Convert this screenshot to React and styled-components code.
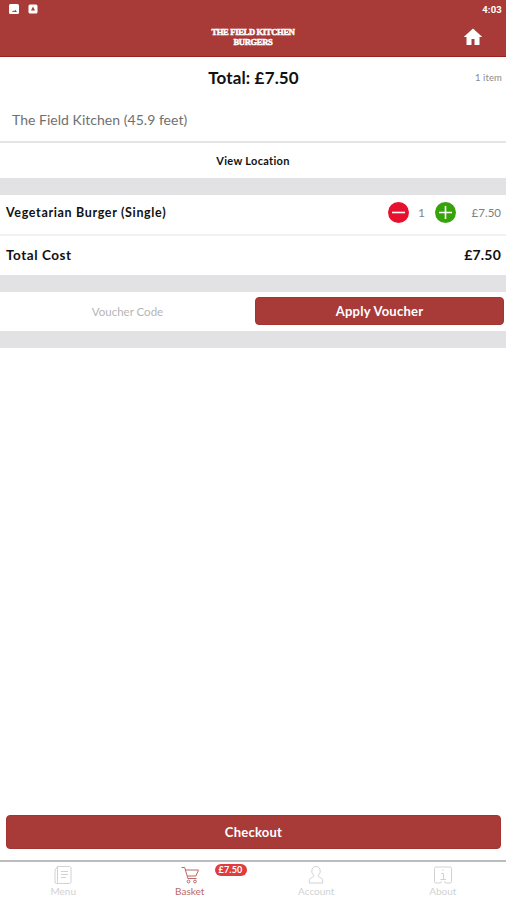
import React from 'react';
import styled, { createGlobalStyle } from 'styled-components';

const GlobalStyle = createGlobalStyle`
  * {
    box-sizing: border-box;
  }
  body {
    margin: 0;
    background-color: #fff;
    font-family: Lato, 'Open Sans', sans-serif;
    font-variant-ligatures: none;
    color: #111;
  }
`;

const Screen = styled.div`
  display: flex;
  flex-direction: column;
  width: 100%;
  height: 100vh;
  overflow: hidden;
`;

const Header = styled.header`
  height: 57px;
  flex: none;
  background-color: #a83b38;
  border-bottom: 1px solid #97201f;
  color: #fff;
`;

const StatusBar = styled.div`
  display: flex;
  align-items: center;
  height: 18px;
  padding: 0 4px 0 9px;
`;

const StatusIcon = styled.svg`
  width: 10px;
  height: 10px;
  margin-right: 9px;
`;

const Clock = styled.span`
  margin-left: auto;
  font-family: Roboto, sans-serif;
  font-size: 9.5px;
  font-weight: 700;
  letter-spacing: 0.2px;
`;

const TitleBar = styled.div`
  display: grid;
  grid-template-columns: 1fr auto 1fr;
  align-items: center;
  height: 38px;
  padding: 0 23px;
`;

const Brand = styled.div`
  grid-column: 2;
  font-family: 'Liberation Serif', serif;
  font-size: 8.5px;
  font-weight: 700;
  line-height: 10px;
  text-align: center;
  -webkit-text-stroke: 0.5px #fff;
  letter-spacing: -0.3px;
`;

const HomeIcon = styled.svg`
  justify-self: end;
  width: 20px;
  height: 18px;
  fill: #fff;
`;

const Text = styled.span`
  font-size: ${p => p.size || 13}px;
  font-weight: ${p => (p.$bold ? 700 : 400)};
  color: ${p => p.$color || '#111'};
  letter-spacing: ${p => p.$spacing || 0}px;
  line-height: 20px;
  white-space: nowrap;
`;

const Summary = styled.div`
  display: grid;
  grid-template-columns: 1fr auto 1fr;
  align-items: center;
  height: 42px;
  padding: 0 4px 0 5px;
  ${Text}:first-child {
    grid-column: 2;
  }
  ${Text}:last-child {
    justify-self: end;
  }
`;

const Venue = styled.div`
  display: flex;
  align-items: center;
  height: 44px;
  padding-left: 12px;
  border-bottom: 2px solid #e4e4e5;
`;

const LocationLink = styled.a`
  display: flex;
  align-items: center;
  justify-content: center;
  height: 35px;
`;

const Band = styled.div`
  height: 17px;
  flex: none;
  background-color: #e2e2e4;
`;

const Row = styled.div`
  display: flex;
  align-items: center;
  height: ${p => p.height}px;
  padding: 0 5px ${p => (p.$line ? 4 : 2)}px 6px;
  border-bottom: ${p => (p.$line ? '2px solid #f1f1f1' : 'none')};
`;

const Stepper = styled.div`
  display: flex;
  align-items: center;
  justify-content: space-between;
  width: 68px;
  margin-left: auto;
  margin-right: 16px;
`;

const StepIcon = styled.svg`
  width: 21px;
  height: 21px;
  stroke: #fff;
  stroke-width: 1.6;
`;

const Push = styled(Text)`
  margin-left: auto;
`;

const Voucher = styled.div`
  display: grid;
  grid-template-columns: 1fr 249px;
  align-items: center;
  height: 39px;
  padding: 0 2px 1px 0;
`;

const CodeInput = styled.input`
  width: 100%;
  border: 0;
  outline: 0;
  background: none;
  font-family: inherit;
  font-size: 11.5px;
  text-align: center;
  &::placeholder {
    color: #b5b5b5;
    opacity: 1;
  }
`;

const Button = styled.button`
  height: ${p => p.height}px;
  padding: 0;
  border: 1px solid #a23432;
  border-radius: 4px;
  background-color: #a83b38;
  color: #fff;
  font-family: inherit;
  font-size: 13px;
  font-weight: 700;
  letter-spacing: 0.25px;
`;

const Footer = styled.div`
  display: flex;
  flex-direction: column;
  margin-top: auto;
  padding: 0 5px 11px 6px;
`;

const TabBar = styled.nav`
  display: grid;
  grid-template-columns: repeat(4, 1fr);
  flex: none;
  height: 40px;
  border-top: 2px solid #bcbcbf;
`;

const Tab = styled.a`
  position: relative;
  display: flex;
  flex-direction: column;
  align-items: center;
  padding-top: 3px;
  color: ${p => (p.$active ? '#bb6967' : '#d2d2d2')};
  font-size: 10px;
  line-height: 12px;
`;

const TabIcon = styled.svg`
  width: 20px;
  height: 20px;
  fill: none;
  stroke: currentColor;
  stroke-width: 1;
`;

const Badge = styled.span`
  position: absolute;
  top: 2px;
  left: 88px;
  width: 32px;
  height: 12px;
  border-radius: 6px;
  background-color: #e13c3d;
  color: #fff;
  font-size: 9px;
  font-weight: 700;
  line-height: 12px;
  letter-spacing: 0.2px;
  text-align: center;
`;

const App = () => (
  <Screen>
    <GlobalStyle />
    <Header>
      <StatusBar>
        <StatusIcon viewBox="0 0 10 10">
          <rect width="10" height="10" rx="1.5" fill="#fff" />
          <path d="M3 8l1.2-1.4L5 7.4 6.3 5.8 8 8z" fill="#a83b38" />
        </StatusIcon>
        <StatusIcon viewBox="0 0 10 10">
          <rect x="0.5" y="0.5" width="9" height="9" rx="1.5" fill="#fff" />
          <path d="M5 2.600L7 6.500H3z" fill="#a83b38" />
        </StatusIcon>
        <Clock>4:03</Clock>
      </StatusBar>
      <TitleBar>
        <Brand>
          THE FIELD KITCHEN
          <br />
          BURGERS
        </Brand>
        <HomeIcon viewBox="0 0 20 18">
          <path d="M10 0.5L0.7 9H3.5v8h5v-6h3v6h5V9h2.8z" />
        </HomeIcon>
      </TitleBar>
    </Header>

    <Summary>
      <Text size={17} $bold $spacing={0.15}>Total: £7.50</Text>
      <Text size={9.5} $color="#8b8b8b" $spacing={0.1}>1 item</Text>
    </Summary>
    <Venue>
      <Text size={14} $color="#707070" $spacing={0.03}>The Field Kitchen (45.9 feet)</Text>
    </Venue>
    <LocationLink>
      <Text size={11} $bold $spacing={0.3}>View Location</Text>
    </LocationLink>
    <Band />
    <Row height={41} $line>
      <Text size={12.5} $bold $spacing={0.66}>Vegetarian Burger (Single)</Text>
      <Stepper>
        <StepIcon viewBox="0 0 21 21">
          <circle cx="10.5" cy="10.5" r="10.5" fill="#e8112d" stroke="none" />
          <path d="M4 10.5h13" />
        </StepIcon>
        <Text size={12} $color="#858585">1</Text>
        <StepIcon viewBox="0 0 21 21">
          <circle cx="10.5" cy="10.5" r="10.5" fill="#37a30b" stroke="none" />
          <path d="M4 10.5h13M10.5 4v13" />
        </StepIcon>
      </Stepper>
      <Text size={11.5} $color="#808080">£7.50</Text>
    </Row>
    <Row height={39}>
      <Text size={13.5} $bold $spacing={0.55}>Total Cost</Text>
      <Push size={14} $bold $spacing={0.2}>£7.50</Push>
    </Row>
    <Band />
    <Voucher>
      <CodeInput placeholder="Voucher Code" />
      <Button height={28}>Apply Voucher</Button>
    </Voucher>
    <Band />

    <Footer>
      <Button height={34}>Checkout</Button>
    </Footer>
    <TabBar>
      <Tab>
        <TabIcon viewBox="0 0 20 20">
          <path d="M4.5 1.5h12a1.5 1.5 0 0 1 1.5 1.5v14a1.5 1.5 0 0 1-1.5 1.5h-13a1.5 1.5 0 0 1-1.5-1.5v-12zM4.5 1.5v17M8 6.5h7M8 9.5h7M8 12.5h5" />
        </TabIcon>
        Menu
      </Tab>
      <Tab $active>
        <TabIcon viewBox="0 0 20 20">
          <path d="M1.5 2.5h3.2l3.2 11h8.600M5.3 5h13.2l-2.600 6H7" />
          <circle cx="8.5" cy="16.5" r="1.4" />
          <circle cx="15" cy="16.5" r="1.4" />
        </TabIcon>
        Basket
        <Badge>£7.50</Badge>
      </Tab>
      <Tab>
        <TabIcon viewBox="0 0 20 20">
          <path d="M10 1.5c-2.6 0-4.2 2-4.2 4.6 0 2 .9 3.6 2.2 4.5-.3 1.2-1 1.5-2.5 2.1-2 .8-2.3 2.4-2.3 5.300h13.600c0-2.900-.3-4.500-2.300-5.300-1.500-.6-2.200-.9-2.500-2.100 1.300-.9 2.200-2.500 2.200-4.500 0-2.600-1.600-4.600-4.200-4.600z" />
        </TabIcon>
        Account
      </Tab>
      <Tab>
        <TabIcon viewBox="0 0 20 20">
          <path d="M7 18H3a1.500 1.500 0 0 1-1.500-1.500v-13A1.500 1.500 0 0 1 3 2h14a1.500 1.500 0 0 1 1.500 1.500v13A1.500 1.500 0 0 1 17 18h-4M8 8.500h2.500V14M7.500 14.500h5.500M10 4.500v1.500M7 18l2-1.500M13 18l-2-1.500" />
        </TabIcon>
        About
      </Tab>
    </TabBar>
  </Screen>
);

export default App;
